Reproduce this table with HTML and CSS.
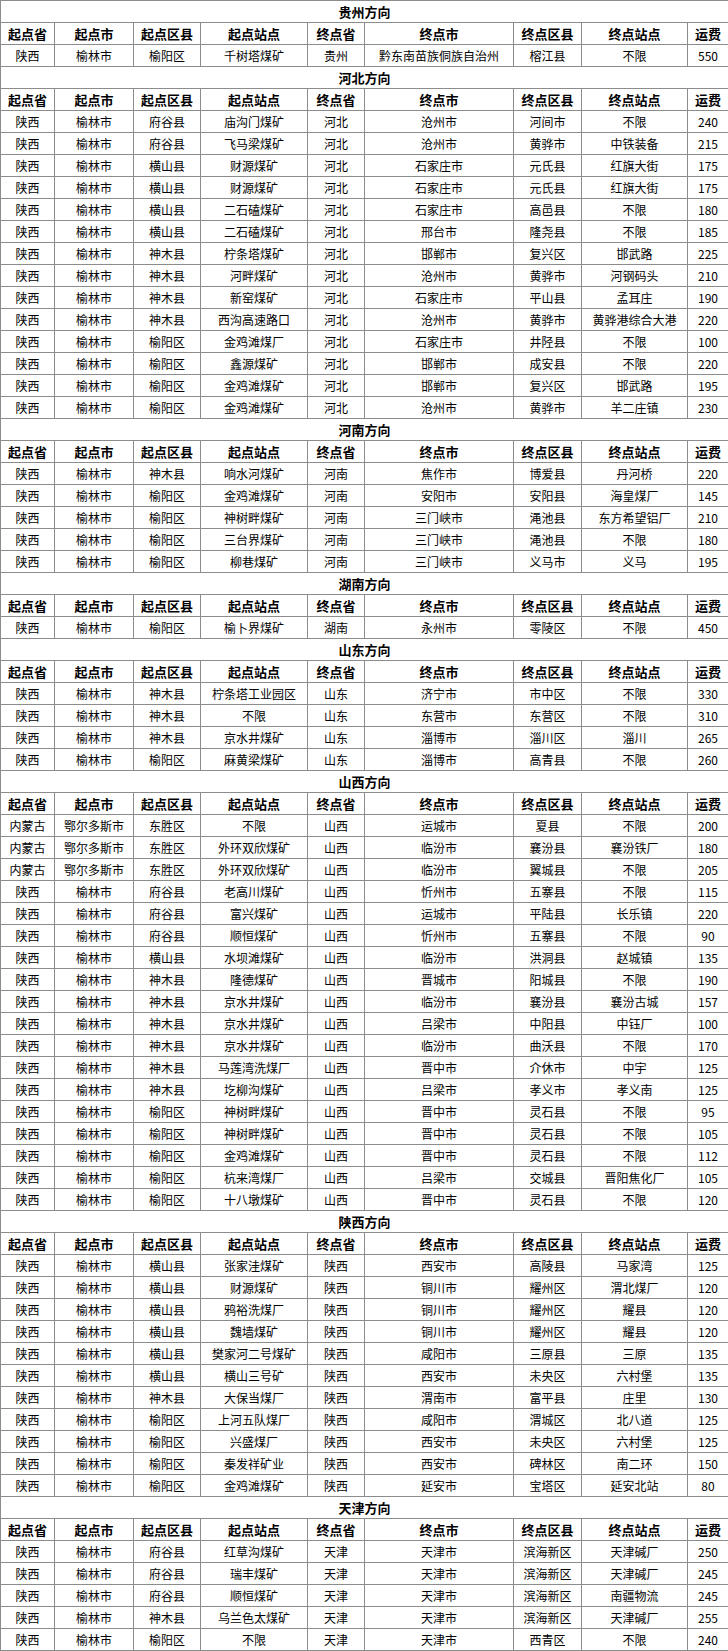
FILE: index.html
```html
<!DOCTYPE html>
<html lang="zh-CN">
<head>
<meta charset="utf-8">
<title>运费表</title>
<link rel="stylesheet" href="styles.css">
</head>
<body>
<table class="freight">
<colgroup>
<col class="c1"><col class="c2"><col class="c3"><col class="c4"><col class="c5"><col class="c6"><col class="c7"><col class="c8"><col class="c9">
</colgroup>
<tbody>
<tr class="title"><td colspan="9">贵州方向</td></tr>
<tr class="head"><td>起点省</td><td>起点市</td><td>起点区县</td><td>起点站点</td><td>终点省</td><td>终点市</td><td>终点区县</td><td>终点站点</td><td>运费</td></tr>
<tr><td>陕西</td><td>榆林市</td><td>榆阳区</td><td>千树塔煤矿</td><td>贵州</td><td>黔东南苗族侗族自治州</td><td>榕江县</td><td>不限</td><td>550</td></tr>

<tr class="title"><td colspan="9">河北方向</td></tr>
<tr class="head"><td>起点省</td><td>起点市</td><td>起点区县</td><td>起点站点</td><td>终点省</td><td>终点市</td><td>终点区县</td><td>终点站点</td><td>运费</td></tr>
<tr><td>陕西</td><td>榆林市</td><td>府谷县</td><td>庙沟门煤矿</td><td>河北</td><td>沧州市</td><td>河间市</td><td>不限</td><td>240</td></tr>
<tr><td>陕西</td><td>榆林市</td><td>府谷县</td><td>飞马梁煤矿</td><td>河北</td><td>沧州市</td><td>黄骅市</td><td>中铁装备</td><td>215</td></tr>
<tr><td>陕西</td><td>榆林市</td><td>横山县</td><td>财源煤矿</td><td>河北</td><td>石家庄市</td><td>元氏县</td><td>红旗大街</td><td>175</td></tr>
<tr><td>陕西</td><td>榆林市</td><td>横山县</td><td>财源煤矿</td><td>河北</td><td>石家庄市</td><td>元氏县</td><td>红旗大街</td><td>175</td></tr>
<tr><td>陕西</td><td>榆林市</td><td>横山县</td><td>二石磕煤矿</td><td>河北</td><td>石家庄市</td><td>高邑县</td><td>不限</td><td>180</td></tr>
<tr><td>陕西</td><td>榆林市</td><td>横山县</td><td>二石磕煤矿</td><td>河北</td><td>邢台市</td><td>隆尧县</td><td>不限</td><td>185</td></tr>
<tr><td>陕西</td><td>榆林市</td><td>神木县</td><td>柠条塔煤矿</td><td>河北</td><td>邯郸市</td><td>复兴区</td><td>邯武路</td><td>225</td></tr>
<tr><td>陕西</td><td>榆林市</td><td>神木县</td><td>河畔煤矿</td><td>河北</td><td>沧州市</td><td>黄骅市</td><td>河钢码头</td><td>210</td></tr>
<tr><td>陕西</td><td>榆林市</td><td>神木县</td><td>新窑煤矿</td><td>河北</td><td>石家庄市</td><td>平山县</td><td>孟耳庄</td><td>190</td></tr>
<tr><td>陕西</td><td>榆林市</td><td>神木县</td><td>西沟高速路口</td><td>河北</td><td>沧州市</td><td>黄骅市</td><td>黄骅港综合大港</td><td>220</td></tr>
<tr><td>陕西</td><td>榆林市</td><td>榆阳区</td><td>金鸡滩煤厂</td><td>河北</td><td>石家庄市</td><td>井陉县</td><td>不限</td><td>100</td></tr>
<tr><td>陕西</td><td>榆林市</td><td>榆阳区</td><td>鑫源煤矿</td><td>河北</td><td>邯郸市</td><td>成安县</td><td>不限</td><td>220</td></tr>
<tr><td>陕西</td><td>榆林市</td><td>榆阳区</td><td>金鸡滩煤矿</td><td>河北</td><td>邯郸市</td><td>复兴区</td><td>邯武路</td><td>195</td></tr>
<tr><td>陕西</td><td>榆林市</td><td>榆阳区</td><td>金鸡滩煤矿</td><td>河北</td><td>沧州市</td><td>黄骅市</td><td>羊二庄镇</td><td>230</td></tr>

<tr class="title"><td colspan="9">河南方向</td></tr>
<tr class="head"><td>起点省</td><td>起点市</td><td>起点区县</td><td>起点站点</td><td>终点省</td><td>终点市</td><td>终点区县</td><td>终点站点</td><td>运费</td></tr>
<tr><td>陕西</td><td>榆林市</td><td>神木县</td><td>响水河煤矿</td><td>河南</td><td>焦作市</td><td>博爱县</td><td>丹河桥</td><td>220</td></tr>
<tr><td>陕西</td><td>榆林市</td><td>榆阳区</td><td>金鸡滩煤矿</td><td>河南</td><td>安阳市</td><td>安阳县</td><td>海皇煤厂</td><td>145</td></tr>
<tr><td>陕西</td><td>榆林市</td><td>榆阳区</td><td>神树畔煤矿</td><td>河南</td><td>三门峡市</td><td>渑池县</td><td>东方希望铝厂</td><td>210</td></tr>
<tr><td>陕西</td><td>榆林市</td><td>榆阳区</td><td>三台界煤矿</td><td>河南</td><td>三门峡市</td><td>渑池县</td><td>不限</td><td>180</td></tr>
<tr><td>陕西</td><td>榆林市</td><td>榆阳区</td><td>柳巷煤矿</td><td>河南</td><td>三门峡市</td><td>义马市</td><td>义马</td><td>195</td></tr>

<tr class="title"><td colspan="9">湖南方向</td></tr>
<tr class="head"><td>起点省</td><td>起点市</td><td>起点区县</td><td>起点站点</td><td>终点省</td><td>终点市</td><td>终点区县</td><td>终点站点</td><td>运费</td></tr>
<tr><td>陕西</td><td>榆林市</td><td>榆阳区</td><td>榆卜界煤矿</td><td>湖南</td><td>永州市</td><td>零陵区</td><td>不限</td><td>450</td></tr>

<tr class="title"><td colspan="9">山东方向</td></tr>
<tr class="head"><td>起点省</td><td>起点市</td><td>起点区县</td><td>起点站点</td><td>终点省</td><td>终点市</td><td>终点区县</td><td>终点站点</td><td>运费</td></tr>
<tr><td>陕西</td><td>榆林市</td><td>神木县</td><td>柠条塔工业园区</td><td>山东</td><td>济宁市</td><td>市中区</td><td>不限</td><td>330</td></tr>
<tr><td>陕西</td><td>榆林市</td><td>神木县</td><td>不限</td><td>山东</td><td>东营市</td><td>东营区</td><td>不限</td><td>310</td></tr>
<tr><td>陕西</td><td>榆林市</td><td>神木县</td><td>京水井煤矿</td><td>山东</td><td>淄博市</td><td>淄川区</td><td>淄川</td><td>265</td></tr>
<tr><td>陕西</td><td>榆林市</td><td>榆阳区</td><td>麻黄梁煤矿</td><td>山东</td><td>淄博市</td><td>高青县</td><td>不限</td><td>260</td></tr>

<tr class="title"><td colspan="9">山西方向</td></tr>
<tr class="head"><td>起点省</td><td>起点市</td><td>起点区县</td><td>起点站点</td><td>终点省</td><td>终点市</td><td>终点区县</td><td>终点站点</td><td>运费</td></tr>
<tr><td>内蒙古</td><td>鄂尔多斯市</td><td>东胜区</td><td>不限</td><td>山西</td><td>运城市</td><td>夏县</td><td>不限</td><td>200</td></tr>
<tr><td>内蒙古</td><td>鄂尔多斯市</td><td>东胜区</td><td>外环双欣煤矿</td><td>山西</td><td>临汾市</td><td>襄汾县</td><td>襄汾铁厂</td><td>180</td></tr>
<tr><td>内蒙古</td><td>鄂尔多斯市</td><td>东胜区</td><td>外环双欣煤矿</td><td>山西</td><td>临汾市</td><td>翼城县</td><td>不限</td><td>205</td></tr>
<tr><td>陕西</td><td>榆林市</td><td>府谷县</td><td>老高川煤矿</td><td>山西</td><td>忻州市</td><td>五寨县</td><td>不限</td><td>115</td></tr>
<tr><td>陕西</td><td>榆林市</td><td>府谷县</td><td>富兴煤矿</td><td>山西</td><td>运城市</td><td>平陆县</td><td>长乐镇</td><td>220</td></tr>
<tr><td>陕西</td><td>榆林市</td><td>府谷县</td><td>顺恒煤矿</td><td>山西</td><td>忻州市</td><td>五寨县</td><td>不限</td><td>90</td></tr>
<tr><td>陕西</td><td>榆林市</td><td>横山县</td><td>水坝滩煤矿</td><td>山西</td><td>临汾市</td><td>洪洞县</td><td>赵城镇</td><td>135</td></tr>
<tr><td>陕西</td><td>榆林市</td><td>神木县</td><td>隆德煤矿</td><td>山西</td><td>晋城市</td><td>阳城县</td><td>不限</td><td>190</td></tr>
<tr><td>陕西</td><td>榆林市</td><td>神木县</td><td>京水井煤矿</td><td>山西</td><td>临汾市</td><td>襄汾县</td><td>襄汾古城</td><td>157</td></tr>
<tr><td>陕西</td><td>榆林市</td><td>神木县</td><td>京水井煤矿</td><td>山西</td><td>吕梁市</td><td>中阳县</td><td>中钰厂</td><td>100</td></tr>
<tr><td>陕西</td><td>榆林市</td><td>神木县</td><td>京水井煤矿</td><td>山西</td><td>临汾市</td><td>曲沃县</td><td>不限</td><td>170</td></tr>
<tr><td>陕西</td><td>榆林市</td><td>神木县</td><td>马莲湾洗煤厂</td><td>山西</td><td>晋中市</td><td>介休市</td><td>中宇</td><td>125</td></tr>
<tr><td>陕西</td><td>榆林市</td><td>神木县</td><td>圪柳沟煤矿</td><td>山西</td><td>吕梁市</td><td>孝义市</td><td>孝义南</td><td>125</td></tr>
<tr><td>陕西</td><td>榆林市</td><td>榆阳区</td><td>神树畔煤矿</td><td>山西</td><td>晋中市</td><td>灵石县</td><td>不限</td><td>95</td></tr>
<tr><td>陕西</td><td>榆林市</td><td>榆阳区</td><td>神树畔煤矿</td><td>山西</td><td>晋中市</td><td>灵石县</td><td>不限</td><td>105</td></tr>
<tr><td>陕西</td><td>榆林市</td><td>榆阳区</td><td>金鸡滩煤矿</td><td>山西</td><td>晋中市</td><td>灵石县</td><td>不限</td><td>112</td></tr>
<tr><td>陕西</td><td>榆林市</td><td>榆阳区</td><td>杭来湾煤厂</td><td>山西</td><td>吕梁市</td><td>交城县</td><td>晋阳焦化厂</td><td>105</td></tr>
<tr><td>陕西</td><td>榆林市</td><td>榆阳区</td><td>十八墩煤矿</td><td>山西</td><td>晋中市</td><td>灵石县</td><td>不限</td><td>120</td></tr>

<tr class="title"><td colspan="9">陕西方向</td></tr>
<tr class="head"><td>起点省</td><td>起点市</td><td>起点区县</td><td>起点站点</td><td>终点省</td><td>终点市</td><td>终点区县</td><td>终点站点</td><td>运费</td></tr>
<tr><td>陕西</td><td>榆林市</td><td>横山县</td><td>张家洼煤矿</td><td>陕西</td><td>西安市</td><td>高陵县</td><td>马家湾</td><td>125</td></tr>
<tr><td>陕西</td><td>榆林市</td><td>横山县</td><td>财源煤矿</td><td>陕西</td><td>铜川市</td><td>耀州区</td><td>渭北煤厂</td><td>120</td></tr>
<tr><td>陕西</td><td>榆林市</td><td>横山县</td><td>鸦裕洗煤厂</td><td>陕西</td><td>铜川市</td><td>耀州区</td><td>耀县</td><td>120</td></tr>
<tr><td>陕西</td><td>榆林市</td><td>横山县</td><td>魏墙煤矿</td><td>陕西</td><td>铜川市</td><td>耀州区</td><td>耀县</td><td>120</td></tr>
<tr><td>陕西</td><td>榆林市</td><td>横山县</td><td>樊家河二号煤矿</td><td>陕西</td><td>咸阳市</td><td>三原县</td><td>三原</td><td>135</td></tr>
<tr><td>陕西</td><td>榆林市</td><td>横山县</td><td>横山三号矿</td><td>陕西</td><td>西安市</td><td>未央区</td><td>六村堡</td><td>135</td></tr>
<tr><td>陕西</td><td>榆林市</td><td>神木县</td><td>大保当煤厂</td><td>陕西</td><td>渭南市</td><td>富平县</td><td>庄里</td><td>130</td></tr>
<tr><td>陕西</td><td>榆林市</td><td>榆阳区</td><td>上河五队煤厂</td><td>陕西</td><td>咸阳市</td><td>渭城区</td><td>北八道</td><td>125</td></tr>
<tr><td>陕西</td><td>榆林市</td><td>榆阳区</td><td>兴盛煤厂</td><td>陕西</td><td>西安市</td><td>未央区</td><td>六村堡</td><td>125</td></tr>
<tr><td>陕西</td><td>榆林市</td><td>榆阳区</td><td>秦发祥矿业</td><td>陕西</td><td>西安市</td><td>碑林区</td><td>南二环</td><td>150</td></tr>
<tr><td>陕西</td><td>榆林市</td><td>榆阳区</td><td>金鸡滩煤矿</td><td>陕西</td><td>延安市</td><td>宝塔区</td><td>延安北站</td><td>80</td></tr>

<tr class="title"><td colspan="9">天津方向</td></tr>
<tr class="head"><td>起点省</td><td>起点市</td><td>起点区县</td><td>起点站点</td><td>终点省</td><td>终点市</td><td>终点区县</td><td>终点站点</td><td>运费</td></tr>
<tr><td>陕西</td><td>榆林市</td><td>府谷县</td><td>红草沟煤矿</td><td>天津</td><td>天津市</td><td>滨海新区</td><td>天津碱厂</td><td>250</td></tr>
<tr><td>陕西</td><td>榆林市</td><td>府谷县</td><td>瑞丰煤矿</td><td>天津</td><td>天津市</td><td>滨海新区</td><td>天津碱厂</td><td>245</td></tr>
<tr><td>陕西</td><td>榆林市</td><td>府谷县</td><td>顺恒煤矿</td><td>天津</td><td>天津市</td><td>滨海新区</td><td>南疆物流</td><td>245</td></tr>
<tr><td>陕西</td><td>榆林市</td><td>神木县</td><td>乌兰色太煤矿</td><td>天津</td><td>天津市</td><td>滨海新区</td><td>天津碱厂</td><td>255</td></tr>
<tr><td>陕西</td><td>榆林市</td><td>榆阳区</td><td>不限</td><td>天津</td><td>天津市</td><td>西青区</td><td>不限</td><td>240</td></tr>
</tbody>
</table>
</body>
</html>
```

FILE: styles.css
```css
html, body {
  margin: 0;
  padding: 0;
  background: #ffffff;
}

body {
  font-family: "Noto Sans CJK SC", "Liberation Sans", sans-serif;
  font-size: 12px;
  color: #000000;
}

.freight {
  width: 728px;
  border-collapse: collapse;
  table-layout: fixed;
}

.c1 { width: 54px; }
.c2 { width: 79px; }
.c3 { width: 67px; }
.c4 { width: 107px; }
.c5 { width: 57px; }
.c6 { width: 149px; }
.c7 { width: 68px; }
.c8 { width: 106px; }
.c9 { width: 41px; }

.freight td {
  border: 1px solid #8c8c8c;
  height: 21px;
  padding: 0;
  line-height: 20px;
  text-align: center;
  white-space: nowrap;
  overflow: hidden;
}

.freight tr.title td {
  font-weight: bold;
  font-size: 13px;
}

.freight tr.head td {
  font-weight: bold;
  font-size: 13px;
}
```
